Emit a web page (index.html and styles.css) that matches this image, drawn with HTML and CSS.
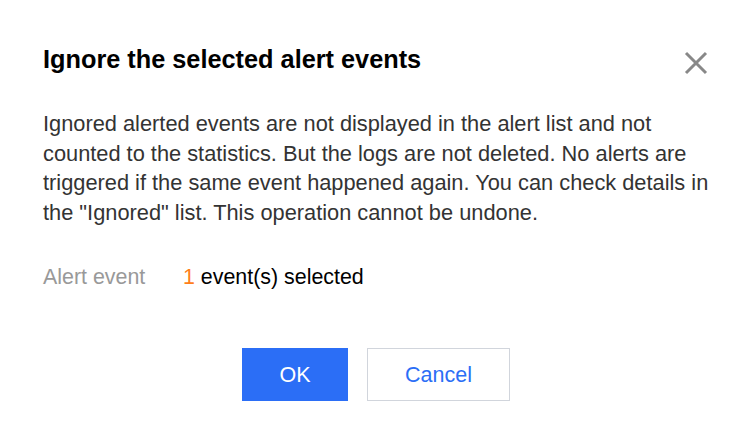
FILE: index.html
```html
<!DOCTYPE html>
<html>
<head>
<meta charset="utf-8">
<link rel="stylesheet" href="styles.css">
</head>
<body>
<div class="dialog">
  <div class="header">
    <h1 class="title">Ignore the selected alert events</h1>
    <button class="close" aria-label="Close">
      <svg width="24" height="24" viewBox="0 0 24 24"><path d="M2 2 L22 22 M22 2 L2 22" stroke="#888" stroke-width="3" fill="none"/></svg>
    </button>
  </div>
  <p class="desc">Ignored alerted events are not displayed in the alert list and not counted to the statistics. But the logs are not deleted. No alerts are triggered if the same event happened again. You can check details in the "Ignored" list. This operation cannot be undone.</p>
  <div class="field">
    <span class="label">Alert event</span>
    <span class="value"><span class="count">1</span> event(s) selected</span>
  </div>
  <div class="actions">
    <button class="btn primary">OK</button>
    <button class="btn secondary">Cancel</button>
  </div>
</div>
</body>
</html>
```
FILE: styles.css
```css
html, body {
  margin: 0;
  background: #fff;
}
body {
  font-family: "Liberation Sans", Arial, sans-serif;
  color: #000;
}
.dialog {
  width: 752px;
  height: 442px;
  box-sizing: border-box;
  padding: 43px 43px 0 43px;
}
.header {
  display: flex;
  justify-content: space-between;
  align-items: flex-start;
}
.title {
  margin: 0;
  font-size: 25.3px;
  line-height: 32px;
  font-weight: bold;
  color: #000;
}
.close {
  border: none;
  background: none;
  padding: 0;
  margin: 8px 0 0 0;
  width: 24px;
  height: 24px;
  cursor: pointer;
  position: relative;
  left: -1px;
}
.close svg { display: block; }
.desc {
  margin: 34px 0 0 0;
  font-size: 21.8px;
  line-height: 29.5px;
  color: #333;
  width: 666px;
}
.field {
  margin-top: 37px;
  display: flex;
  font-size: 21.4px;
  line-height: 26px;
}
.label {
  width: 140px;
  color: #999;
}
.value { color: #000; }
.count { color: #ff7e1a; }
.actions {
  margin-top: 58px;
  display: flex;
  justify-content: center;
  gap: 19px;
}
.btn {
  height: 53px;
  font-family: "Liberation Sans", Arial, sans-serif;
  font-size: 21.5px;
  box-sizing: border-box;
  cursor: pointer;
  padding: 2px 0 0 0;
}
.primary {
  width: 106px;
  background: #2b6ef6;
  color: #fff;
  border: none;
}
.secondary {
  width: 143px;
  background: #fff;
  color: #2b6ef6;
  border: 1px solid #d1d5dc;
}
```
